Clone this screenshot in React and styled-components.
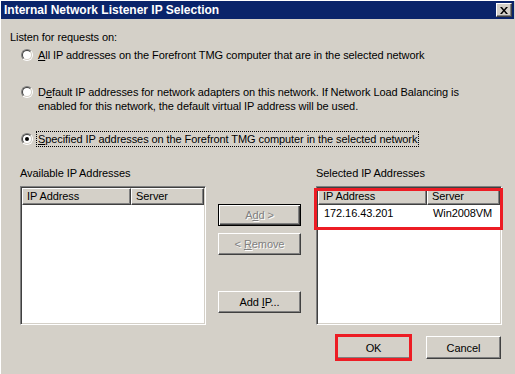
import React from "react";
import styled, { createGlobalStyle, css } from "styled-components";

const GlobalStyle = createGlobalStyle`
  html, body { margin: 0; padding: 0; background: #d4d0c8; overflow: hidden; }
  * { box-sizing: border-box; }
`;

const FONT = `"Liberation Sans", Arial, sans-serif`;

const Window = styled.div`
  width: 515px;
  height: 374px;
  background: #d4d0c8;
  border-left: 1px solid #ffffff;
  border-top: 1px solid #ffffff;
  font-family: ${FONT};
  font-size: 11px;
  letter-spacing: -0.08px;
  color: #000;
  display: flex;
  flex-direction: column;
`;

const TitleBar = styled.div`
  height: 18px;
  width: 513px;
  background: #0a246a;
  display: flex;
  align-items: center;
  justify-content: space-between;
  padding: 0 2px 0 3px;
`;

const TitleText = styled.span`
  color: #fff;
  font-weight: bold;
  font-size: 12px;
  letter-spacing: 0;
  line-height: 14px;
`;

const CloseButton = styled.div`
  width: 16px;
  height: 14px;
  background: #d4d0c8;
  border-top: 1px solid #fff;
  border-left: 1px solid #fff;
  border-right: 1px solid #404040;
  border-bottom: 1px solid #404040;
  box-shadow: inset -1px -1px 0 #808080;
  display: flex;
  align-items: center;
  justify-content: center;
`;

const Content = styled.div`
  display: flex;
  flex-direction: column;
`;

const Text = styled.div`
  line-height: 14px;
  white-space: nowrap;
`;

const Heading = styled(Text)`
  margin: 11px 0 0 9px;
`;

const RadioGroup = styled.div`
  display: flex;
  flex-direction: column;
  padding-left: 20px;
`;

const RadioRow = styled.div`
  display: flex;
  align-items: flex-start;
  gap: 3px;
  margin-top: ${(p) => p.$gap}px;
`;

const RadioOuter = styled.span`
  flex: none;
  width: 12px;
  height: 12px;
  margin-top: 2px;
  border-radius: 50%;
  border: 1px solid;
  border-color: #808080 #ffffff #ffffff #808080;
  display: flex;
`;

const RadioInner = styled.span`
  flex: 1;
  border-radius: 50%;
  border: 1px solid;
  border-color: #404040 #d4d0c8 #d4d0c8 #404040;
  background: #fff;
  display: flex;
  align-items: center;
  justify-content: center;
`;

const Dot = styled.span`
  width: 4px;
  height: 4px;
  border-radius: 50%;
  background: #000;
`;

const RadioLabel = styled.span`
  line-height: 14px;
  padding: 0 1px;
  border: 1px ${(p) => (p.$focused ? "dotted #000" : "solid transparent")};
  white-space: nowrap;
`;

const Section = styled.div`
  display: flex;
  margin-top: 19px;
  padding-left: 19px;
`;

const ListColumn = styled.div`
  width: 186px;
  display: flex;
  flex-direction: column;
  gap: 6px;
`;

const ListBox = styled.div`
  position: relative;
  height: 139px;
  background: #fff;
  border: 1px solid;
  border-color: #808080 #ffffff #ffffff #808080;
  box-shadow: inset 1px 1px 0 #404040, inset -1px -1px 0 #d4d0c8;
  padding: 1px;
`;

const Grid = styled.div`
  display: grid;
  grid-template-columns: 109px 1fr;
`;

const HeaderCell = styled.div`
  height: 17px;
  background: #d4d0c8;
  border-top: 1px solid #fff;
  border-left: 1px solid #fff;
  border-right: 1px solid #404040;
  border-bottom: 1px solid #404040;
  box-shadow: inset -1px -1px 0 #808080;
  padding-left: 4px;
  line-height: 14px;
  white-space: nowrap;
`;

const Cell = styled.div`
  height: 17px;
  line-height: 17px;
  padding-left: 6px;
  white-space: nowrap;
`;

const Highlight = styled.div`
  position: absolute;
  border: 3px solid #ed1c24;
  pointer-events: none;
  ${(p) => css`
    left: ${p.$l}px;
    top: ${p.$t}px;
    width: ${p.$w}px;
    height: ${p.$h}px;
  `}
`;

const ButtonColumn = styled.div`
  width: 83px;
  margin: 0 15px 0 12px;
  display: flex;
  flex-direction: column;
  padding-top: 38px;
`;

const Button = styled.div`
  position: relative;
  width: ${(p) => p.$w || 83}px;
  height: ${(p) => p.$h || 22}px;
  margin-top: ${(p) => p.$mt || 0}px;
  background: #d4d0c8;
  display: flex;
  align-items: center;
  justify-content: center;
  line-height: 14px;
  white-space: pre;
  border: 1px solid;
  border-color: #ffffff #404040 #404040 #ffffff;
  box-shadow: inset -1px -1px 0 #808080;
  ${(p) =>
    p.$default &&
    css`
      border-color: #000;
      box-shadow: inset 1px 1px 0 #fff, inset -1px -1px 0 #404040, inset -2px -2px 0 #808080;
    `}
  ${(p) =>
    p.$disabled &&
    css`
      color: #808080;
      text-shadow: 1px 1px 0 #fff;
    `}
`;

const Footer = styled.div`
  display: flex;
  justify-content: flex-end;
  gap: 15px;
  padding-right: 14px;
  margin-top: 11px;
`;

const U = styled.span`
  text-decoration: underline;
`;

function Radio({ checked }) {
  return (
    <RadioOuter>
      <RadioInner>{checked && <Dot />}</RadioInner>
    </RadioOuter>
  );
}

function ListView({ rows, children }) {
  return (
    <ListBox>
      <Grid>
        <HeaderCell>IP Address</HeaderCell>
        <HeaderCell>Server</HeaderCell>
        {rows.map((r) => (
          <React.Fragment key={r[0]}>
            <Cell>{r[0]}</Cell>
            <Cell>{r[1]}</Cell>
          </React.Fragment>
        ))}
      </Grid>
      {children}
    </ListBox>
  );
}

export default function App() {
  return (
    <>
      <GlobalStyle />
      <Window>
        <TitleBar>
          <TitleText>Internal Network Listener IP Selection</TitleText>
          <CloseButton>
            <svg width="8" height="7" viewBox="0 0 8 7">
              <path d="M0 0h2l2 2.5L6 0h2L5 3.5 8 7H6L4 4.5 2 7H0l3-3.5z" fill="#000" />
            </svg>
          </CloseButton>
        </TitleBar>
        <Content>
          <Heading>Listen for requests on:</Heading>
          <RadioGroup>
            <RadioRow $gap={3}>
              <Radio />
              <RadioLabel>
                <U>A</U>ll IP addresses on the Forefront TMG computer that are in the selected network
              </RadioLabel>
            </RadioRow>
            <RadioRow $gap={21}>
              <Radio />
              <RadioLabel>
                D<U>e</U>fault IP addresses for network adapters on this network. If Network Load Balancing is
                <br />
                enabled for this network, the default virtual IP address will be used.
              </RadioLabel>
            </RadioRow>
            <RadioRow $gap={17}>
              <Radio checked />
              <RadioLabel $focused>
                <U>S</U>pecified IP addresses on the Forefront TMG computer in the selected network
              </RadioLabel>
            </RadioRow>
          </RadioGroup>
          <Section>
            <ListColumn>
              <Text>Available IP Addresses</Text>
              <ListView rows={[]} />
            </ListColumn>
            <ButtonColumn>
              <Button $default $disabled>
                <span>
                  A<U>d</U>d &gt;
                </span>
              </Button>
              <Button $disabled $mt={7}>
                <span>
                  &lt; <U>R</U>emove
                </span>
              </Button>
              <Button $mt={36}>
                <span>
                  Add <U>I</U>P...
                </span>
              </Button>
            </ButtonColumn>
            <ListColumn>
              <Text>Selected IP Addresses</Text>
              <ListView rows={[["172.16.43.201", "Win2008VM"]]}>
                <Highlight $l={-3} $t={1} $w={189} $h={42} />
              </ListView>
            </ListColumn>
          </Section>
          <Footer>
            <Button $w={75} $h={23}>
              <span>OK</span>
              <Highlight $l={-2} $t={-3} $w={77} $h={27} />
            </Button>
            <Button $w={75} $h={23}>
              <span>Cancel</span>
            </Button>
          </Footer>
        </Content>
      </Window>
    </>
  );
}
